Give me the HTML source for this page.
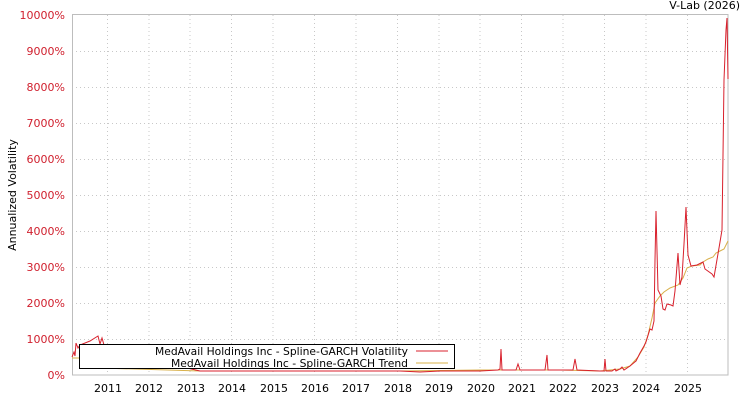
<!DOCTYPE html>
<html><head><meta charset="utf-8"><style>
body{margin:0;background:#fff;width:750px;height:400px;overflow:hidden}
svg text{font-family:"DejaVu Sans","Liberation Sans",sans-serif}
</style></head><body>
<svg width="750" height="400" viewBox="0 0 750 400">
<g stroke="#c8c8c8" stroke-width="1" stroke-dasharray="1,3" fill="none">
<line x1="72" y1="51.5" x2="728" y2="51.5"/><line x1="72" y1="87.5" x2="728" y2="87.5"/>
<line x1="72" y1="123.5" x2="728" y2="123.5"/><line x1="72" y1="159.5" x2="728" y2="159.5"/>
<line x1="72" y1="195.5" x2="728" y2="195.5"/><line x1="72" y1="231.5" x2="728" y2="231.5"/>
<line x1="72" y1="267.5" x2="728" y2="267.5"/><line x1="72" y1="303.5" x2="728" y2="303.5"/>
<line x1="72" y1="339.5" x2="728" y2="339.5"/>
<line x1="107.5" y1="15" x2="107.5" y2="375"/><line x1="149" y1="15" x2="149" y2="375"/>
<line x1="190" y1="15" x2="190" y2="375"/><line x1="231.5" y1="15" x2="231.5" y2="375"/>
<line x1="273" y1="15" x2="273" y2="375"/><line x1="314.5" y1="15" x2="314.5" y2="375"/>
<line x1="356" y1="15" x2="356" y2="375"/><line x1="397.5" y1="15" x2="397.5" y2="375"/>
<line x1="439" y1="15" x2="439" y2="375"/><line x1="480" y1="15" x2="480" y2="375"/>
<line x1="521.5" y1="15" x2="521.5" y2="375"/><line x1="563" y1="15" x2="563" y2="375"/>
<line x1="604.5" y1="15" x2="604.5" y2="375"/><line x1="646" y1="15" x2="646" y2="375"/>
<line x1="687.5" y1="15" x2="687.5" y2="375"/>
</g>
<rect x="72.5" y="14.5" width="655.5" height="360.5" fill="none" stroke="#bdbdbd"/>
<g fill="#d0202e" font-size="11" text-anchor="end">
<text x="65" y="19">10000%</text><text x="65" y="55">9000%</text><text x="65" y="91">8000%</text>
<text x="65" y="127">7000%</text><text x="65" y="163">6000%</text><text x="65" y="199">5000%</text>
<text x="65" y="235">4000%</text><text x="65" y="271">3000%</text><text x="65" y="307">2000%</text>
<text x="65" y="343">1000%</text><text x="65" y="379">0%</text>
</g>
<text transform="translate(16,195) rotate(-90)" font-size="11" text-anchor="middle" fill="#000">Annualized Volatility</text>
<g font-size="11" text-anchor="middle" fill="#000">
<text x="108" y="392">2011</text><text x="149" y="392">2012</text><text x="191" y="392">2013</text>
<text x="232" y="392">2014</text><text x="274" y="392">2015</text><text x="315" y="392">2016</text>
<text x="356" y="392">2017</text><text x="398" y="392">2018</text><text x="439" y="392">2019</text>
<text x="481" y="392">2020</text><text x="522" y="392">2021</text><text x="563" y="392">2022</text>
<text x="605" y="392">2023</text><text x="646" y="392">2024</text><text x="688" y="392">2025</text>
</g>
<text x="740" y="9" font-size="11" text-anchor="end" fill="#000">V-Lab (2026)</text>
<polyline fill="none" stroke="#d8b04a" stroke-width="1" points="72,358 80,358 100,368 200,371 400,371 480,370 560,370 600,371 620,369 630,366 638,357 644,347 648,335 652,318 655,303 660,296 664,292 670,288 678,285 683,278 687,268 692,266 700,265 703,262 708,259 713,257 716,253 720,251 724,249 728,241"/>
<polyline fill="none" stroke="#d8202c" stroke-width="1" points="72,357 74,352 75,356 76,343 78,348 80,345 90,341 98,336 100,344 102,338 104,345 110,350 200,371 300,371 400,371 420,372 440,371 480,371 498,370 500,369 501,349 502,370 516,370 518,364 520,370 545,370 547,355 548,370 573,370 575,359 577,370 600,371 604,371 605,359 606,371 612,371 615,369 616,371 620,369 622,367 624,370 630,366 636,361 640,353 644,346 646,342 650,329 652,330 654,321 655,260 656,211 658,290 661,296 663,309 665,310 667,304 671,305 673,306 675,291 678,253 680,285 682,277 684,244 686,207 688,255 691,266 697,265 703,262 705,269 712,274 714,277 719,248 722,230 724,80 726,30 727,18 728,79"/>
<rect x="79.5" y="344.5" width="375" height="24" fill="#fff" stroke="#000"/>
<g font-size="11" text-anchor="end" fill="#000">
<text x="408" y="355" textLength="253" lengthAdjust="spacingAndGlyphs">MedAvail Holdings Inc - Spline-GARCH Volatility</text>
<text x="408" y="367" textLength="237" lengthAdjust="spacingAndGlyphs">MedAvail Holdings Inc - Spline-GARCH Trend</text>
</g>
<line x1="416" y1="351" x2="448" y2="351" stroke="#d8202c"/>
<line x1="416" y1="363" x2="448" y2="363" stroke="#d8b04a"/>
</svg>
</body></html>
